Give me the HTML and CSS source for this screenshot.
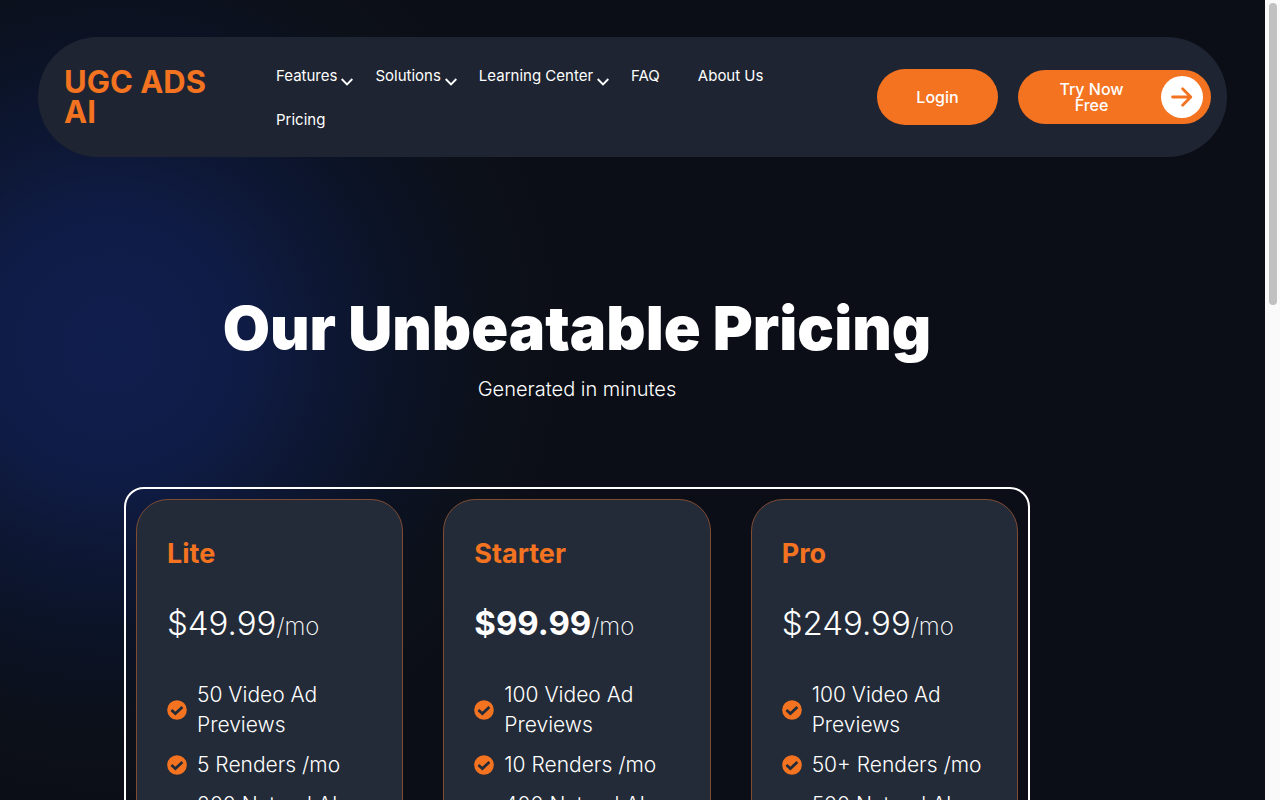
FILE: index.html
```html
<!DOCTYPE html>
<html lang="en">
<head>
    <meta charset="UTF-8">
    <meta name="viewport" content="width=device-width, initial-scale=1.0">
    <title>Pricing | UGC ADS AI</title>

    <link rel="stylesheet" href="styles.css">

</head>
<body>

    <!-- shared icons -->
    <svg class="sprite" aria-hidden="true">
        <symbol id="chevron" viewBox="0 0 12 8">
            <path d="M0.7 1 L6 6.3 L11.3 1" fill="none" stroke="currentColor" stroke-width="1.9"/>
        </symbol>
        <symbol id="check" viewBox="0 0 20 20">
            <circle cx="10" cy="10" r="9.8" fill="#f37321"/>
            <path d="M4.4 10 L8.4 13.6 L15.4 7" fill="none" stroke="#232b38" stroke-width="2.7"/>
        </symbol>
    </svg>

    <!-- header -->
    <header class="header">
        <a class="logo" href="#">UGC ADS AI</a>

        <nav class="nav">
            <ul class="nav-list">
                <li><a href="#">Features<svg class="chevron"><use href="#chevron"/></svg></a></li>
                <li><a href="#">Solutions<svg class="chevron"><use href="#chevron"/></svg></a></li>
                <li><a href="#">Learning Center<svg class="chevron"><use href="#chevron"/></svg></a></li>
                <li><a href="#">FAQ</a></li>
                <li><a href="#">About Us</a></li>
                <li><a href="#">Pricing</a></li>
            </ul>
        </nav>

        <div class="actions">
            <button class="btn btn-login">Login</button>
            <button class="btn btn-try">
                <span class="btn-label">Try Now Free</span>
                <span class="btn-circle">
                    <svg width="22" height="22" viewBox="0 0 22 22" fill="none" stroke="#f37321" stroke-width="2.8" stroke-linecap="round" stroke-linejoin="round">
                        <path d="M1.6 11 H19 M11.6 2.8 L19.8 11 L11.6 19.2"/>
                    </svg>
                </span>
            </button>
        </div>
    </header>

    <!-- pricing -->
    <main class="pricing">
        <h1 class="title">Our Unbeatable Pricing</h1>
        <p class="subtitle">Generated in minutes</p>

        <div class="plans">
            <section class="card">
                <h2 class="plan">Lite</h2>
                <p class="price">$49.99<span class="per">/mo</span></p>
                <ul class="features">
                    <li><svg class="check"><use href="#check"/></svg><span>50 Video Ad Previews</span></li>
                    <li><svg class="check"><use href="#check"/></svg><span>5 Renders /mo</span></li>
                    <li><svg class="check"><use href="#check"/></svg><span>200 Natural AI Voices</span></li>
                </ul>
            </section>

            <section class="card">
                <h2 class="plan">Starter</h2>
                <p class="price price-bold">$99.99<span class="per">/mo</span></p>
                <ul class="features">
                    <li><svg class="check"><use href="#check"/></svg><span>100 Video Ad Previews</span></li>
                    <li><svg class="check"><use href="#check"/></svg><span>10 Renders /mo</span></li>
                    <li><svg class="check"><use href="#check"/></svg><span>400 Natural AI Voices</span></li>
                </ul>
            </section>

            <section class="card">
                <h2 class="plan">Pro</h2>
                <p class="price">$249.99<span class="per">/mo</span></p>
                <ul class="features">
                    <li><svg class="check"><use href="#check"/></svg><span>100 Video Ad Previews</span></li>
                    <li><svg class="check"><use href="#check"/></svg><span>50+ Renders /mo</span></li>
                    <li><svg class="check"><use href="#check"/></svg><span>500 Natural AI Voices</span></li>
                </ul>
            </section>
        </div>
    </main>

    <div class="scrollbar"><div class="thumb"></div></div>

</body>
</html>
```

FILE: styles.css
```css
* {
    box-sizing: border-box;
    margin: 0;
    padding: 0;
}

body {
    height: 100vh;
    overflow: hidden;
    padding-right: 15px;
    background: radial-gradient(circle at 110px 345px, #101e4e 0, #0f1c47 120px, #0d1733 220px, #0b1223 310px, #0c1018 400px, #0b0d17 480px) #0b0d17;
    color: #fff;
    font-family: Inter, "Liberation Sans", sans-serif;
}

a {
    color: inherit;
    text-decoration: none;
}

ul {
    list-style: none;
}

.sprite {
    position: absolute;
    width: 0;
    height: 0;
}

/* header */
.header {
    display: flex;
    align-items: center;
    min-height: 120px;
    margin: 37px 38px 0;
    padding: 0 16px 0 26px;
    border-radius: 60px;
    background: #1e2431;
}

.logo {
    flex: 0 0 160px;
    color: #f37321;
    font-size: 31px;
    font-weight: 700;
    line-height: 30px;
}

.nav {
    flex: 1;
    margin-left: 52px;
}

.nav-list {
    display: flex;
    flex-wrap: wrap;
    column-gap: 22px;
    max-width: 540px;
    padding-top: 2px;
    font-size: 15px;
    font-weight: 400;
    line-height: 44px;
}

.nav-list a {
    position: relative;
    display: block;
    padding-right: 16px;
}

.chevron {
    position: absolute;
    right: 0;
    bottom: 12px;
    width: 12px;
    height: 8px;
}

.actions {
    display: flex;
    align-items: center;
    gap: 20px;
}

.btn {
    border: 0;
    border-radius: 28px;
    background: #f37321;
    color: #fff;
    font-family: inherit;
    font-size: 16px;
    font-weight: 500;
    line-height: 16px;
    cursor: pointer;
}

.btn-login {
    width: 121px;
    height: 56px;
}

.btn-try {
    display: flex;
    align-items: center;
    width: 193px;
    height: 54px;
    padding: 0 8px 0 32px;
}

.btn-label {
    flex: 1;
    padding-right: 28px;
}

.btn-circle {
    display: flex;
    align-items: center;
    justify-content: center;
    width: 42px;
    height: 42px;
    border-radius: 50%;
    background: #fff;
}

/* pricing */
.pricing {
    max-width: 1030px;
    padding: 136px 0 0 124px;
    text-align: center;
}

.title {
    font-size: 61px;
    font-weight: 900;
    line-height: 70px;
}

.subtitle {
    margin-top: 10px;
    font-size: 20px;
    font-weight: 300;
    line-height: 32px;
}

.plans {
    display: grid;
    grid-template-columns: repeat(3, 1fr);
    gap: 40px;
    margin-top: 82px;
    padding: 10px;
    border: 2px solid #fff;
    border-radius: 20px;
    text-align: left;
}

.card {
    min-height: 700px;
    padding: 36px 30px;
    border: 1px solid #7f4b33;
    border-radius: 32px;
    background: #232b38;
}

.plan {
    color: #f37321;
    font-size: 27px;
    font-weight: 700;
    line-height: 36px;
}

.price {
    margin-top: 29px;
    font-size: 33px;
    font-weight: 300;
    line-height: 44px;
}

.price-bold {
    font-weight: 700;
}

.per {
    font-size: 24px;
    font-weight: 200;
}

.features {
    display: grid;
    gap: 10px;
    margin-top: 31px;
    font-size: 21px;
    font-weight: 300;
    line-height: 30px;
}

.features li {
    display: flex;
    align-items: center;
    gap: 10px;
}

.check {
    flex: none;
    width: 20px;
    height: 20px;
}

/* scrollbar */
.scrollbar {
    position: fixed;
    top: 0;
    right: 0;
    bottom: 0;
    width: 15px;
    padding: 3px 3px 3px 4px;
    background: #fafafa;
}

.thumb {
    height: 38%;
    border-radius: 4px;
    background: #c1c1c1;
}
```
